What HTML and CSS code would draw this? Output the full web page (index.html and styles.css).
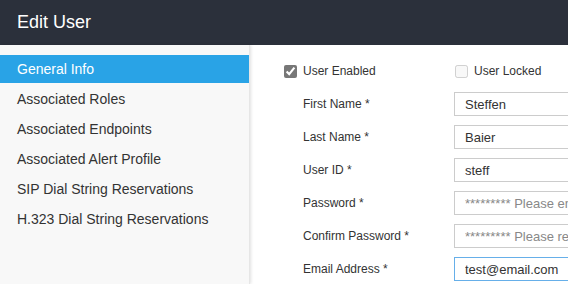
FILE: index.html
```html
<!DOCTYPE html>
<html lang="en">
<head>
    <meta charset="UTF-8">
    <title>Edit User</title>
    <link rel="stylesheet" href="styles.css">
</head>
<body>
    <div class="header">Edit User</div>
    <div class="layout">
        <ul class="sidebar">
            <li class="active">General Info</li>
            <li>Associated Roles</li>
            <li>Associated Endpoints</li>
            <li>Associated Alert Profile</li>
            <li>SIP Dial String Reservations</li>
            <li>H.323 Dial String Reservations</li>
        </ul>
        <div class="main">
            <div class="checks">
                <label class="check"><input type="checkbox" checked> User Enabled</label>
                <label class="check locked"><input type="checkbox" disabled> User Locked</label>
            </div>
            <div class="field">
                <label>First Name *</label>
                <input type="text" value="Steffen">
            </div>
            <div class="field">
                <label>Last Name *</label>
                <input type="text" value="Baier">
            </div>
            <div class="field">
                <label>User ID *</label>
                <input type="text" value="steff">
            </div>
            <div class="field">
                <label>Password *</label>
                <input type="text" placeholder="********* Please enter password">
            </div>
            <div class="field">
                <label>Confirm Password *</label>
                <input type="text" placeholder="********* Please re-enter password">
            </div>
            <div class="field">
                <label>Email Address *</label>
                <input type="text" class="focused" value="test@email.com">
            </div>
        </div>
    </div>
</body>
</html>
```
FILE: styles.css
```css
body {
    margin: 0;
    font-family: 'Liberation Sans', Arial, sans-serif;
    color: #333;
    background: #fff;
    overflow: hidden;
    height: 284px;
}
.header {
    height: 45px;
    line-height: 44px;
    background: #2b303b;
    color: #fff;
    font-size: 18px;
    padding-left: 17px;
}
.layout {
    display: flex;
    height: 239px;
}
.sidebar {
    list-style: none;
    margin: 0;
    padding: 10px 0 0 0;
    width: 250px;
    flex-shrink: 0;
    background: #f8f8f8;
    border-right: 1px solid #e6e6e6;
    box-shadow: 1px 0 3px rgba(0, 0, 0, 0.12);
    box-sizing: border-box;
}
.sidebar li {
    height: 28px;
    line-height: 28px;
    margin-bottom: 2px;
    padding-left: 17px;
    font-size: 14px;
    color: #333;
}
.sidebar li.active {
    background: #29a3e6;
    color: #fff;
}
.main {
    flex: 1;
    padding: 14px 0 0 34px;
    overflow: hidden;
}
.checks {
    display: flex;
    height: 24px;
    align-items: center;
    margin-bottom: 9px;
    font-size: 12px;
}
.check {
    display: flex;
    align-items: center;
    width: 171px;
    flex-shrink: 0;
}
.check input {
    width: 13px;
    height: 13px;
    margin: 0 6px 0 0;
    accent-color: #777;
}
.field {
    display: flex;
    align-items: center;
    margin: 0 0 9px 19px;
}
.field label {
    width: 151px;
    flex-shrink: 0;
    font-size: 12px;
    color: #333;
}
.field input {
    width: 220px;
    flex-shrink: 0;
    height: 24px;
    box-sizing: border-box;
    padding: 0 10px;
    border: 1px solid #ccc;
    font-family: 'Liberation Sans', Arial, sans-serif;
    font-size: 13px;
    color: #333;
    outline: none;
}
.field input::placeholder {
    color: #888;
}
.field input.focused {
    border-color: #66afe9;
}
```
